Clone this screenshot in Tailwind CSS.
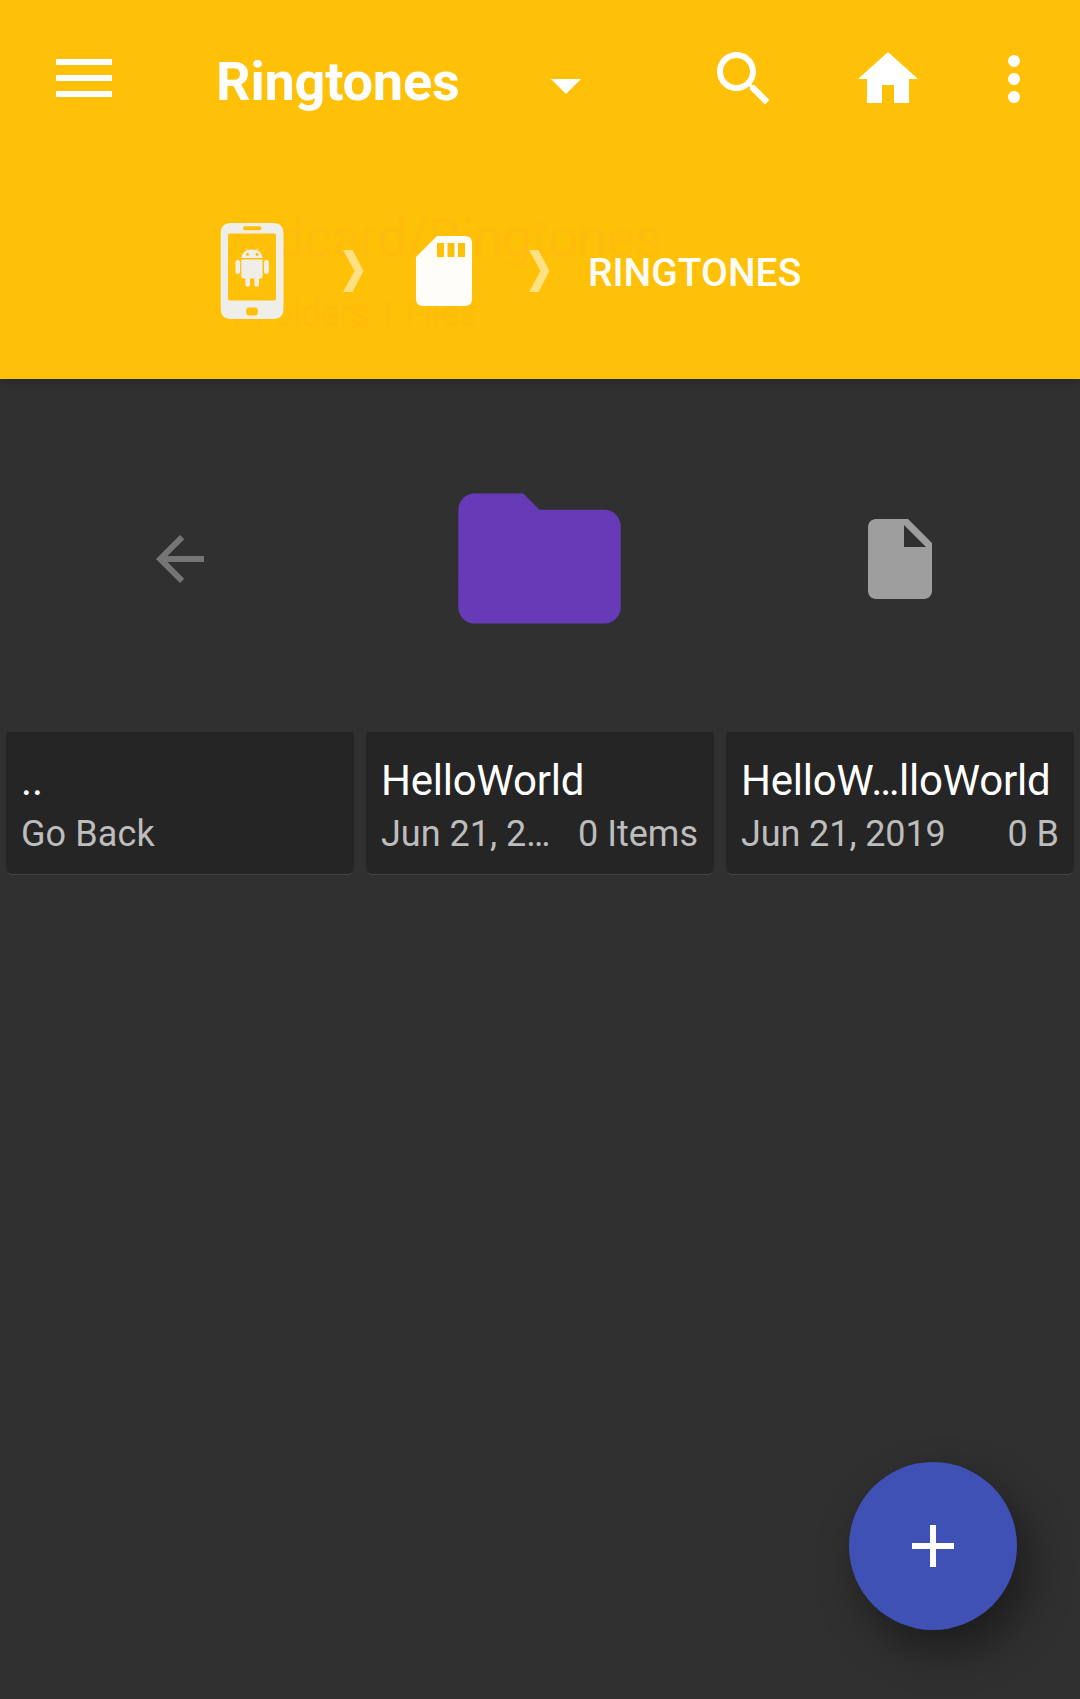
<!DOCTYPE html>
<html lang="en">
<head>
<meta charset="utf-8">
<title>Ringtones</title>
<script src="https://cdn.jsdelivr.net/npm/@tailwindcss/browser@4"></script>
</head>
<body class="bg-[#303030] font-['Roboto',sans-serif] w-[1080px] h-[1699px] overflow-hidden relative flex flex-col">
<header class="bg-[#ffc107] h-[379px] shrink-0 shadow-[0_3px_10px_rgba(0,0,0,0.2)]">
  <div class="flex items-center h-[158px] pl-14 pr-[30px]">
    <svg class="w-14 h-[38px] shrink-0 -mt-0.5" viewBox="0 0 56 38" fill="#fff"><path d="M0 0h56v6H0zM0 16h56v6H0zM0 32h56v6H0z"/></svg>
    <h1 class="ml-[104px] w-[335px] pt-1.5 text-[54px] leading-[64px] font-bold tracking-[-0.2px] text-white"><span class="inline-block">Ringtones</span></h1>
    <svg class="w-[30px] h-[15px] mt-[15px] shrink-0" viewBox="0 0 30 15" fill="#fff"><path d="M0 0h30L15 15z"/></svg>
    <div class="flex ml-auto">
      <svg class="w-[72px] h-[72px] mr-[72px]" viewBox="0 0 24 24" fill="#fff"><path d="M15.5 14h-.79l-.28-.27C15.41 12.59 16 11.11 16 9.5 16 5.91 13.09 3 9.5 3S3 5.91 3 9.5 5.91 16 9.5 16c1.61 0 3.09-.59 4.23-1.57l.27.28v.79l5 4.99L20.49 19l-4.99-5zm-6 0C7.01 14 5 11.99 5 9.5S7.01 5 9.5 5 14 7.01 14 9.5 11.99 14 9.5 14z"/></svg>
      <svg class="w-[72px] h-[72px] mr-[54px]" viewBox="0 0 24 24" fill="#fff"><path d="M10 20v-6h4v6h5v-8h3L12 3 2 12h3v8z"/></svg>
      <svg class="w-[72px] h-[72px]" viewBox="0 0 24 24" fill="#fff"><circle cx="12" cy="6" r="2"/><circle cx="12" cy="12" r="2"/><circle cx="12" cy="18" r="2"/></svg>
    </div>
  </div>
  <div class="relative h-[221px]">
    <!-- Path details, nearly faded out behind the breadcrumbs -->
    <div class="absolute left-[226px] top-[48px] text-[#ffbc0c] whitespace-nowrap">
      <p class="text-[54px] leading-[64px] tracking-[-0.85px]">/sdcard/Ringtones</p>
      <p class="text-[36px] leading-[42px] mt-[23px] tracking-[-0.6px]">1 Folders 1 Files</p>
    </div>
    <nav class="relative flex items-center h-[226px] pl-[220px]">
      <svg class="w-16 h-24 shrink-0" viewBox="0 0 64 96" fill="#efeee9"><path fill-rule="evenodd" d="M11 0H53Q63.500 0 63.500 11V85Q63.500 96 53 96H11Q.7 96 .7 85V11Q.7 0 11 0ZM10 10.500Q8 10.500 8 12.500V75.500Q8 77.500 10 77.500H54Q56 77.500 56 75.500V12.500Q56 10.500 54 10.500ZM25 3.300a2 2 0 0 0 0 4H39.500a2 2 0 0 0 0-4ZM29 84.500Q26 84.500 26 88Q26 92.500 29 92.500H35Q38 92.500 38 88Q38 84.500 35 84.500Z"/><path fill-rule="evenodd" d="M21.500 35Q22 29 27 27.500L25 24.500 28 27Q32 26 36 27L39.500 24.500 37 27.500Q42 29 42.500 35ZM27.500 30a1.500 1.500 0 1 0 .1 3 1.500 1.500 0 0 0-.1-3Zm9.500 0a1.500 1.500 0 1 0 .1 3 1.500 1.500 0 0 0-.1-3Z"/><path d="M21.300 36.500H42.500V53.500Q42.500 55.500 40.500 55.500H39V61.500a2.300 2.300 0 0 1-4.600 0V55.500H30V61.500a2.300 2.300 0 0 1-4.600 0V55.500H23.300Q21.300 55.500 21.300 53.500Z"/><rect x="15.500" y="37" width="4.600" height="14" rx="2.300"/><rect x="44" y="37" width="4.800" height="14" rx="2.300"/></svg>
      <svg class="w-[21px] h-[42px] ml-[59px] shrink-0" viewBox="0 0 21 42" fill="#ffe083"><path d="M0 0h9.500L20.500 21 9.500 42H0L11.500 21z"/></svg>
      <svg class="w-14 h-[70px] ml-[52px] shrink-0" viewBox="0 0 56 70" fill="#fffdf8"><path fill-rule="evenodd" d="M21 0H49Q56 0 56 7V63Q56 70 49 70H7Q0 70 0 63V21ZM21 7V21H28V7ZM31.500 7V21H38.500V7ZM42 7V21H49V7Z"/></svg>
      <svg class="w-[21px] h-[42px] ml-[57px] shrink-0" viewBox="0 0 21 42" fill="#ffe083"><path d="M0 0h9.500L20.500 21 9.500 42H0L11.500 21z"/></svg>
      <span class="ml-[38px] pt-1 text-[39px] leading-[46px] font-medium text-[#fffdf8]">RINGTONES</span>
    </nav>
  </div>
</header>
<main class="grid grid-cols-3 text-white">
  <article class="flex flex-col">
    <div class="h-[353px] pt-1.5 flex items-center justify-center"><svg class="w-[72px] h-[72px]" viewBox="0 0 24 24" fill="#757575"><path d="M20 11H7.83l5.590-5.590L12 4l-8 8 8 8 1.410-1.410L7.830 13H20v-2z"/></svg></div>
    <div class="mx-1.5 h-[143px] pl-[15px] pr-4 pt-6 bg-[#252525] rounded-b-[6px] border-b border-[#424242]">
      <h2 class="text-[42px] leading-[50px] whitespace-nowrap">..</h2>
      <p class="mt-[7px] text-[36px] leading-[42px] tracking-[0.1px] text-[#bdbdbd]">Go Back</p>
    </div>
  </article>
  <article class="flex flex-col">
    <div class="h-[353px] pt-[5px] flex items-center justify-center"><svg class="w-[195px] h-[195px] mr-px" viewBox="0 0 24 24" fill="#673ab7"><path d="M10 4H4c-1.100 0-1.990.9-1.990 2L2 18c0 1.100.9 2 2 2h16c1.100 0 2-.9 2-2V8c0-1.100-.9-2-2-2h-8l-2-2z"/></svg></div>
    <div class="mx-1.5 h-[143px] pl-[15px] pr-4 pt-6 bg-[#252525] rounded-b-[6px] border-b border-[#424242]">
      <h2 class="text-[42px] leading-[50px] tracking-[-0.2px] whitespace-nowrap">HelloWorld</h2>
      <p class="mt-[7px] text-[36px] leading-[42px] text-[#bdbdbd] flex justify-between whitespace-nowrap"><span>Jun 21, 2…</span><span>0 Items</span></p>
    </div>
  </article>
  <article class="flex flex-col">
    <div class="h-[353px] pt-1.5 flex items-center justify-center"><svg class="w-24 h-24" viewBox="0 0 24 24" fill="#9e9e9e"><path d="M6 2c-1.100 0-1.990.9-1.990 2L4 20c0 1.100.89 2 1.990 2H18c1.100 0 2-.9 2-2V8l-6-6H6zm7 7V3.500L18.500 9H13z"/></svg></div>
    <div class="mx-1.5 h-[143px] pl-[15px] pr-[15px] pt-6 bg-[#252525] rounded-b-[6px] border-b border-[#424242]">
      <h2 class="text-[42px] leading-[50px] tracking-[-0.2px] whitespace-nowrap">HelloW…lloWorld</h2>
      <p class="mt-[7px] text-[36px] leading-[42px] text-[#bdbdbd] flex justify-between whitespace-nowrap"><span class="tracking-[-0.1px]">Jun 21, 2019</span><span>0 B</span></p>
    </div>
  </article>
</main>
<button aria-label="Add" class="absolute right-[63px] bottom-[69px] w-[168px] h-[168px] rounded-full bg-[#3f51b5] flex items-center justify-center shadow-[12px_20px_44px_rgba(0,0,0,0.42)]">
  <svg class="w-[42px] h-[42px]" viewBox="0 0 42 42" fill="#fff"><path d="M18 0h6v18h18v6H24v18h-6V24H0v-6h18z"/></svg>
</button>
</body>
</html>
